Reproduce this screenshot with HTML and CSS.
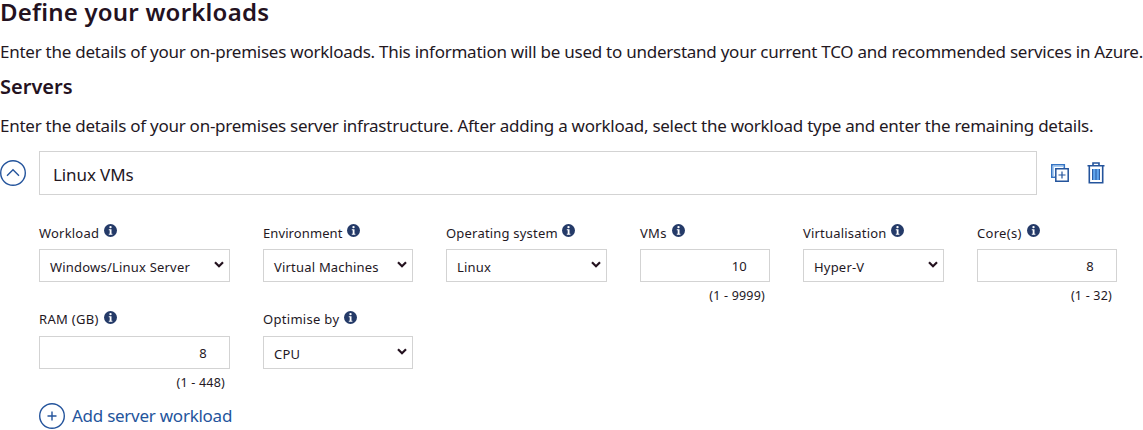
FILE: index.html
```html
<!DOCTYPE html>
<html lang="en">
<head>
<meta charset="utf-8">
<title>Define your workloads</title>
<link rel="stylesheet" href="styles.css">
</head>
<body>
<svg class="defs" aria-hidden="true">
  <symbol id="info" viewBox="0 0 13 13"><circle cx="6.5" cy="6.5" r="6.5" fill="#243a68"/><circle cx="6.5" cy="3.1" r="1.2" fill="#fff"/><path d="M4.8 5.2h2.7v4.6h.9v1H4.8v-1h.9V6.2h-.9z" fill="#fff"/></symbol>
  <symbol id="chevron" viewBox="0 0 10 7"><path d="M1 1.2l4 4 4-4" fill="none" stroke="#24121f" stroke-width="2.2"/></symbol>
</svg>
<main class="page">
  <h1 class="title">Define your workloads</h1>
  <p class="intro intro-main">Enter the details of your on-premises workloads. This information will be used to understand your current TCO and recommended services in Azure.</p>
  <h2 class="subtitle">Servers</h2>
  <p class="intro intro-servers">Enter the details of your on-premises server infrastructure. After adding a workload, select the workload type and enter the remaining details.</p>
  <div class="workload-head">
    <svg class="round" viewBox="0 0 26 26"><circle cx="13" cy="13" r="12.3"/><path d="M7 15.8l6-6 6 6"/></svg>
    <div class="name-box"><span class="name">Linux VMs</span></div>
    <svg class="copy" viewBox="0 0 18 18"><path d="M4 13.3H.8V.8h12.5V4" stroke="#3474c4" stroke-width="1.6"/><path d="M2.5 12V2.5H12" stroke="#a5cdf6" stroke-width="1.2"/><path d="M4.8 4.8h12.4v12.4H4.8z" stroke="#24549c" stroke-width="1.5"/><path d="M11 7.5v7M7.5 11h7" stroke="#24549c" stroke-width="1.2"/></svg>
    <svg class="trash" viewBox="0 0 18 22"><path d="M5 7h8v11H5z" fill="#5ea5ee" stroke="none"/><path d="M.5 3.7h17M6 3.4V1h6v2.4M2.3 4v16.8h13.4V4" stroke="#24549c" stroke-width="1.6"/><path d="M5.6 7v11M9 7v11M12.4 7v11" stroke="#24549c" stroke-width="1"/></svg>
  </div>
  <div class="fields">
    <div class="field"><div class="label"><span>Workload</span><svg class="info"><use href="#info"/></svg></div><div class="control"><span>Windows/Linux Server</span><svg class="chevron"><use href="#chevron"/></svg></div></div>
    <div class="field"><div class="label label-tight"><span>Environment</span><svg class="info"><use href="#info"/></svg></div><div class="control"><span>Virtual Machines</span><svg class="chevron"><use href="#chevron"/></svg></div></div>
    <div class="field"><div class="label"><span>Operating system</span><svg class="info"><use href="#info"/></svg></div><div class="control"><span>Linux</span><svg class="chevron"><use href="#chevron"/></svg></div></div>
    <div class="field"><div class="label label-short"><span>VMs</span><svg class="info"><use href="#info"/></svg></div><div class="control number">10</div><div class="hint">(1 - 9999)</div></div>
    <div class="field"><div class="label"><span>Virtualisation</span><svg class="info"><use href="#info"/></svg></div><div class="control"><span>Hyper-V</span><svg class="chevron"><use href="#chevron"/></svg></div></div>
    <div class="field"><div class="label label-short"><span>Core(s)</span><svg class="info"><use href="#info"/></svg></div><div class="control number">8</div><div class="hint">(1 - 32)</div></div>
    <div class="field"><div class="label label-short label-second"><span>RAM (GB)</span><svg class="info"><use href="#info"/></svg></div><div class="control number">8</div><div class="hint">(1 - 448)</div></div>
    <div class="field"><div class="label label-short label-second"><span>Optimise by</span><svg class="info"><use href="#info"/></svg></div><div class="control"><span>CPU</span><svg class="chevron"><use href="#chevron"/></svg></div></div>
  </div>
  <div class="add">
    <svg class="round" viewBox="0 0 26 26"><circle cx="13" cy="13" r="12.3"/><path d="M13 8.5v9M8.5 13h9"/></svg>
    <span class="add-text">Add server workload</span>
  </div>
</main>
</body>
</html>
```
FILE: styles.css
```css
* { box-sizing: border-box; }
body { margin: 0; background: #fff; color: #24181f; font-family: "Noto Sans", "Open Sans", sans-serif; overflow: hidden; }
.defs { position: absolute; width: 0; height: 0; }
.page { width: 1143px; height: 430px; white-space: nowrap; }
.title { margin: 0; height: 36px; font-size: 24px; line-height: 23px; letter-spacing: 0.22px; font-weight: 600; color: #24121f; }
.intro { margin: 0; font-size: 17px; line-height: 31px; }
.intro-main { height: 36px; letter-spacing: -0.252px; }
.subtitle { margin: 0; height: 38px; font-size: 20px; line-height: 29px; font-weight: 600; color: #24121f; }
.intro-servers { height: 41px; letter-spacing: -0.257px; }
.workload-head { display: flex; align-items: center; height: 44px; }
.round { width: 26px; height: 26px; flex: none; fill: none; stroke: #24549c; stroke-width: 1.4; }
.name-box { display: flex; align-items: center; width: 998px; height: 44px; margin-left: 13px; padding: 2px 13px 0; border: 1px solid #d3d3d3; font-size: 17px; letter-spacing: -0.1px; }
.copy { width: 18px; height: 18px; margin-left: 14px; fill: none; }
.trash { width: 18px; height: 22px; margin-left: 18px; fill: none; }
.fields { display: grid; grid-template-columns: 191px 150px 161px 130px 141px 140px; grid-auto-rows: 87px; column-gap: 33px; padding: 28px 0 0 39px; font-size: 13px; letter-spacing: 0.2px; }
.label { display: flex; gap: 4.5px; height: 26px; line-height: 20px; }
.label-tight { letter-spacing: 0.1px; }
.label-short { gap: 5px; letter-spacing: 0.3px; }
.label-second { line-height: 18px; }
.info { width: 13px; height: 13px; margin-top: 1px; }
.control { display: flex; align-items: center; justify-content: space-between; height: 33px; padding: 2px 5px 0 10px; border: 1px solid #d3d3d3; }
.number { justify-content: flex-end; padding: 0 22px 0 0; }
.chevron { width: 10px; height: 7px; margin-top: -4px; }
.hint { padding: 5px 5px 0 0; text-align: right; font-size: 12.5px; line-height: 18px; }
.add { display: flex; align-items: center; gap: 7px; height: 26px; margin: 6px 0 0 39px; color: #24549c; font-size: 17px; letter-spacing: -0.26px; }
.add-text { padding-bottom: 2px; }
```
